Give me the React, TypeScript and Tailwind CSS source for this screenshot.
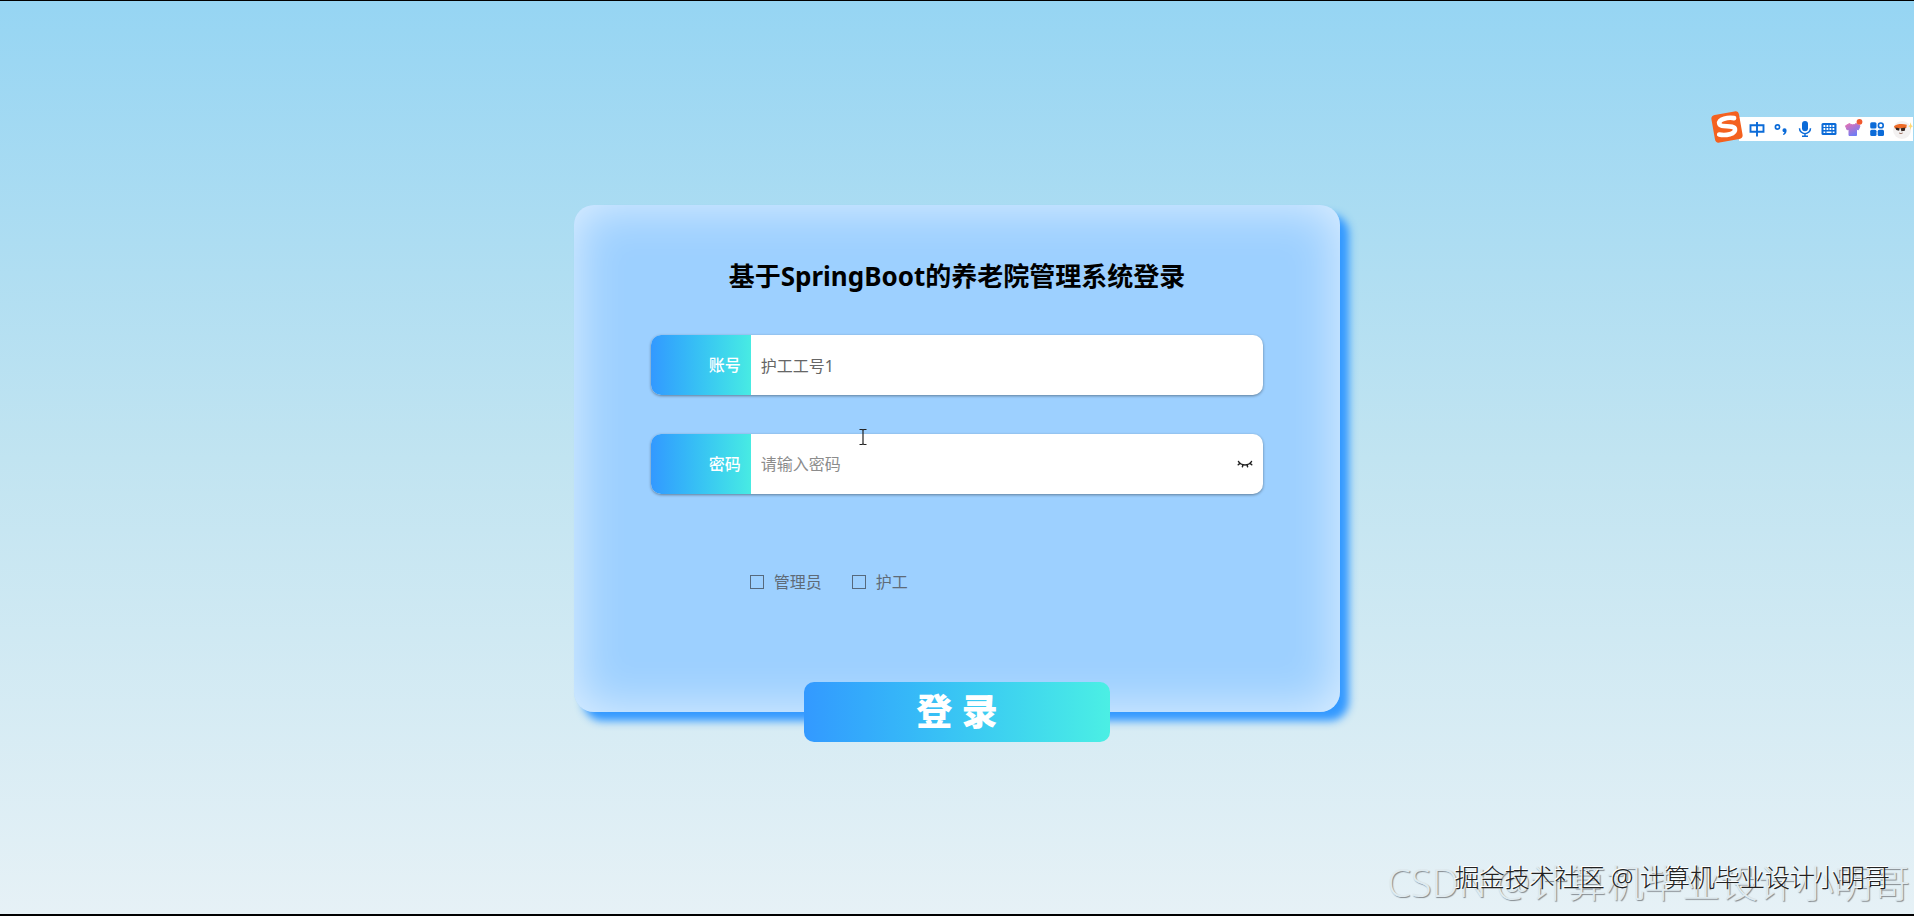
import { useState } from "react";
import type { ReactNode } from "react";

const roles = ["管理员", "护工"];

export default function App() {
  const [account, setAccount] = useState("护工工号1");
  const [password, setPassword] = useState("");
  const [role, setRole] = useState("");
  const [visible, setVisible] = useState(false);

  return (
    <main className="relative flex min-h-screen items-center justify-center overflow-hidden border-t border-b-2 border-black bg-linear-to-b from-[#96d5f3] via-[#c1e4f1] to-[#e6f1f6] pt-0.5 font-['Noto_Sans','Noto_Sans_CJK_SC',sans-serif]">
      <form
        onSubmit={(e) => e.preventDefault()}
        className="flex w-2/5 flex-col items-center rounded-[20px] bg-[#9dd0ff] pt-[51px] shadow-[9px_9px_8px_#3399ff,inset_0_0_50px_rgba(255,255,255,0.7)]"
      >
        <h1 className="mb-[39px] text-[26px] leading-10 font-bold text-black">
          基于SpringBoot的养老院管理系统登录
        </h1>

        <div className="flex w-4/5 flex-col gap-[39px]">
          <Field id="account" label="账号">
            <input
              id="account"
              type="text"
              value={account}
              onChange={(e) => setAccount(e.target.value)}
              className="h-full min-w-0 flex-1 px-2.5 text-base text-[#666] outline-none"
            />
          </Field>
          <Field id="password" label="密码">
            <input
              id="password"
              type={visible ? "text" : "password"}
              value={password}
              placeholder="请输入密码"
              onChange={(e) => setPassword(e.target.value)}
              className="h-full min-w-0 flex-1 px-2.5 text-base text-[#666] outline-none placeholder:text-[#8c8c8c]"
            />
            <button
              type="button"
              aria-label="显示密码"
              onClick={() => setVisible(!visible)}
              className="mr-2 flex h-8 w-5 cursor-pointer items-center justify-center"
            >
              <ClosedEye />
            </button>
          </Field>
        </div>

        {/* Role */}
        <div className="mt-[76px] flex h-6 w-4/5 items-center gap-[30px] pl-[99px]">
          {roles.map((item) => (
            <label
              key={item}
              className="flex cursor-pointer items-center gap-2.5 text-base leading-6 text-[#5f6b78]"
            >
              <input
                type="checkbox"
                checked={role === item}
                onChange={() => setRole(role === item ? "" : item)}
                className="h-3.5 w-3.5 appearance-none border border-[#56697d] checked:bg-[#3399ff]"
              />
              {item}
            </label>
          ))}
        </div>

        <button
          type="submit"
          className="mt-[88px] -mb-[30px] h-[60px] w-2/5 cursor-pointer rounded-[10px] bg-linear-to-r from-[#3399ff] to-[#4befe4] text-4xl font-black text-white"
        >
          登 录
        </button>
      </form>

      <InputMethodBar />
      <TextCursor />

      <p className="absolute right-1 bottom-2 text-[38px] leading-12 font-light whitespace-nowrap text-[#dfeaef] [text-shadow:1px_1px_1px_#858b90]">
        CSDN @计算机毕业设计小明哥
      </p>
      <p className="absolute right-6 bottom-[17px] text-[25px] leading-10 font-light whitespace-nowrap text-[#222] [text-shadow:-1px_-1px_0_#ffffff]">
        掘金技术社区 @ 计算机毕业设计小明哥
      </p>
    </main>
  );
}

function Field({
  id,
  label,
  children,
}: {
  id: string;
  label: string;
  children: ReactNode;
}) {
  return (
    <div className="flex h-[60px] items-center overflow-hidden rounded-[10px] bg-white shadow-[0_1px_3px_rgba(0,0,0,0.4)]">
      <label
        htmlFor={id}
        className="flex h-full w-[100px] shrink-0 items-center justify-end bg-linear-to-r from-[#3399ff] to-[#48ebe3] pr-2.5 text-base font-medium text-white"
      >
        {label}
      </label>
      {children}
    </div>
  );
}

function ClosedEye() {
  return (
    <svg
      viewBox="0 0 16 10"
      className="h-2.5 w-4"
      fill="none"
      stroke="#222"
      strokeWidth="1.5"
      strokeLinecap="round"
    >
      <path d="M1.5 2.5C4 7 12 7 14.5 2.5" />
      <path d="M3 4.5 1.3 5.7M6 5.8 5.4 7.7M10 5.8l.6 1.9M13 4.5l1.7 1.2" />
    </svg>
  );
}

function TextCursor() {
  return (
    <svg
      viewBox="0 0 8 18"
      className="pointer-events-none absolute top-[427px] left-[859px] h-[18px] w-2"
      fill="none"
      stroke="#222"
      strokeWidth="1.2"
    >
      <path d="M.5 1.5h2.7L4 2.3l.8-.8h2.7M4 2v14M.5 16.5h2.7l.8-.8.8.8h2.7" />
    </svg>
  );
}

function InputMethodBar() {
  return (
    <div className="absolute top-28 right-px flex h-8 items-center">
      <svg viewBox="0 0 32 32" className="z-10 -mt-1 h-8 w-8">
        <g transform="rotate(-10 16 16)">
          <rect x="2" y="2" width="28" height="28" rx="4" fill="#f4611f" />
          <path
            d="M24.500 8.500C19 6.500 9 6.500 9 11.300C9 16 23.500 14.500 23.500 19.500C23.500 24.500 13 24.500 7 22"
            fill="none"
            stroke="#fff"
            strokeWidth="4.600"
            strokeLinecap="round"
          />
        </g>
      </svg>
      <div className="-ml-1 flex h-6 items-center gap-2 bg-white pl-2.5">
        {/* 中 */}
        <svg viewBox="0 0 16 16" className="h-4 w-4" fill="none" stroke="#0b6bd8" strokeWidth="1.900">
          <path d="M1.500 4.200h13v6.600h-13zM8 1v14.500" />
        </svg>
        {/* punctuation */}
        <svg viewBox="0 0 16 16" className="h-4 w-4">
          <circle cx="4.500" cy="6" r="2.100" fill="none" stroke="#0b6bd8" strokeWidth="1.700" />
          <path d="M11.500 7.200a2.100 2.100 0 0 1 2.100 2.200c0 2.400-1.400 4-3.200 4.500l-.5-1c.9-.4 1.400-1.100 1.500-1.700a2 2 0 0 1 .1-4z" fill="#0b6bd8" />
        </svg>
        {/* voice */}
        <svg viewBox="0 0 16 16" className="h-4 w-4" fill="none" stroke="#0b6bd8" strokeWidth="1.500">
          <rect x="5" y="0" width="6" height="10.200" rx="3" fill="#0b6bd8" stroke="none" />
          <path d="M2.500 7.200a5.500 5.500 0 0 0 11 0M8 12.600v2.600M5 15.200h6" />
        </svg>
        {/* keyboard */}
        <svg viewBox="0 0 16 16" className="h-4 w-4">
          <rect x="0.500" y="2" width="15" height="12" rx="1.500" fill="#0b6bd8" />
          <path
            d="M2.500 5h11M2.500 8h11"
            stroke="#fff"
            strokeWidth="1.800"
            strokeDasharray="1.800 1.200"
          />
          <path d="M2.500 11.300h1.800M5.500 11.300h5M11.700 11.300h1.800" stroke="#fff" strokeWidth="1.600" />
        </svg>
        {/* skin */}
        <svg viewBox="0 0 16 16" className="h-4 w-4 overflow-visible">
          <defs>
            <linearGradient id="skin" x1="0" y1="0" x2="0.600" y2="1">
              <stop offset="0" stopColor="#e86fb0" />
              <stop offset="1" stopColor="#6f7df5" />
            </linearGradient>
          </defs>
          <path
            d="M4.500 2.500c1.500 1.800 5 1.800 6.500 0l4 2.300-1.500 4-2-.5V14.500H4V8.300l-2 .5L.5 4.800z"
            fill="url(#skin)"
            stroke="url(#skin)"
            strokeLinejoin="round"
          />
          <circle cx="14.500" cy="0.800" r="2.900" fill="#f0592f" />
        </svg>
        {/* toolbox */}
        <svg viewBox="0 0 16 16" className="h-4 w-4" fill="#0b6bd8">
          <rect x="1.200" y="1.200" width="6.300" height="6.300" rx="1.500" />
          <rect x="1.200" y="8.700" width="6.300" height="6.300" rx="1.500" />
          <rect x="8.700" y="8.700" width="6.300" height="6.300" rx="1.500" />
          <circle cx="11.800" cy="4.400" r="2.400" fill="none" stroke="#0b6bd8" strokeWidth="1.600" />
        </svg>
        {/* mascot */}
        <svg viewBox="0 0 21 22" className="h-[22px] w-5">
          <circle cx="9.500" cy="12" r="9.500" fill="#f3f1f1" />
          <path d="M1 8c3-2.500 9-2.700 13.500-1.500l-.5 3.500-12 .5z" fill="#ee6b26" />
          <path d="m2.500 9.500 4.500.8-.6 2.500-3-.8zM8 10.300l5-.8-.6 3.300-3.600.5z" fill="#33241f" />
          <path d="M6.500 15.200c1.200.7 2.400.7 3.600 0" fill="none" stroke="#8a5a4a" />
          <path d="m18.500 4 .8 3 1.700 1-1.700 1-.8 3-.8-3L16 8l1.700-1z" fill="#ffd873" />
        </svg>
      </div>
    </div>
  );
}
